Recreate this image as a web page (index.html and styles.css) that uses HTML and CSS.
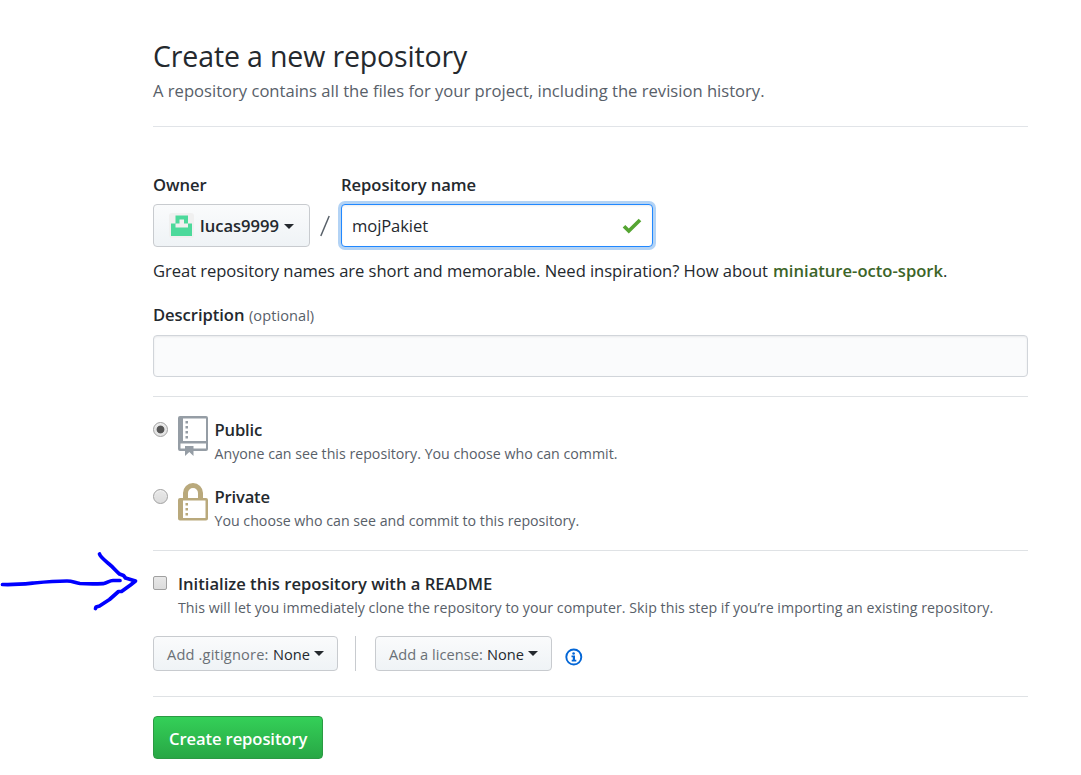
FILE: index.html
```html
<!DOCTYPE html>
<html lang="en">
<head>
<meta charset="utf-8">
<title>Create a new repository</title>
<link rel="stylesheet" href="styles.css">
</head>
<body>
<main class="page">
  <header class="head">
    <h1 class="title">Create a new repository</h1>
    <p class="lead">A repository contains all the files for your project, including the revision history.</p>
  </header>

  <div class="names">
    <div class="field">
      <span class="label owner-label">Owner</span>
      <div class="btn owner">
        <svg class="avatar" width="25" height="25" viewBox="0 0 25 25"><rect width="25" height="25" rx="3" fill="#f0f0f0"/><path fill="#4cd99b" d="M6.500 2.500h12.500v8H23v12.500H2V10.500h4.500z"/><path fill="#f0f0f0" d="M10.500 6.500h4.500v4h4v4H6.500v-4h4z"/></svg>
        <span class="owner-name">lucas9999</span><i class="caret"></i>
      </div>
    </div>
    <span class="slash"><svg width="10" height="22" viewBox="0 0 10 22"><path d="M9.200 1L.8 21" stroke="#586069" stroke-width="1.500"/></svg></span>
    <div class="field">
      <span class="label repo-label">Repository name</span>
      <div class="input focused">
        <span class="value">mojPakiet</span>
        <svg class="check" width="20" height="16" viewBox="0 0 20 16"><path d="M2 8.300l4.800 4.700L18 2" fill="none" stroke="#55a532" stroke-width="3.700"/></svg>
      </div>
    </div>
  </div>
  <p class="hint"><span class="hint-text">Great repository names are short and memorable. Need inspiration? How about </span><strong class="suggestion">miniature-octo-spork</strong>.</p>

  <div class="desc-label"><span class="label desc-word">Description</span><span class="optional">(optional)</span></div>
  <div class="input description"></div>

  <section class="visibility">
    <div class="choice">
      <span class="radio checked"></span>
      <svg class="kind" width="30" height="40" viewBox="0 0 30 40"><path fill="#959da5" fill-rule="evenodd" d="M2 0h26q2 0 2 2v31q0 2-2 2H15.500v5l-4.200-4-4.300 4v-5H2q-2 0-2-2V2q0-2 2-2zM5 2.500v22.500h23V2.500zM2.500 27.500V32.500H7V30h8.500v2.500H28v-5z"/><path fill="#959da5" d="M7.500 5h2.500v2.500H7.500zM7.500 10h2.500v2.500H7.500zM7.500 15h2.500v2.500H7.500zM7.500 20h2.500v2.500H7.500z"/></svg>
      <div class="choice-text"><span class="label public">Public</span><span class="note note-public">Anyone can see this repository. You choose who can commit.</span></div>
    </div>
    <div class="choice">
      <span class="radio"></span>
      <svg class="kind" width="30" height="40" viewBox="0 0 30 40"><path fill="#b9a97c" fill-rule="evenodd" d="M2 15h3v-5a10 10 0 0 1 20 0v5h3q2 0 2 2v18.500q0 2-2 2H2q-2 0-2-2V17q0-2 2-2zM10 15h10v-5a5 5 0 0 0-10 0zM5 17.500V35h22.500V17.500z"/><path fill="#b9a97c" d="M7.500 20h2.500v2.500H7.500zM7.500 25h2.500v2.500H7.500zM7.500 30h2.500v2.500H7.500z"/></svg>
      <div class="choice-text"><span class="label private">Private</span><span class="note note-private">You choose who can see and commit to this repository.</span></div>
    </div>
  </section>

  <section class="init">
    <div class="init-row">
      <span class="checkbox"></span>
      <div class="choice-text"><span class="label readme">Initialize this repository with a README</span><span class="note note-readme">This will let you immediately clone the repository to your computer. Skip this step if you’re importing an existing repository.</span></div>
      <svg class="arrow" width="140" height="62" viewBox="0 0 140 62"><g fill="none" stroke="#00f" stroke-width="3.700" stroke-linecap="round" stroke-linejoin="round"><path d="M2.500 34.500C15 35 24 34 34 33S57 31 67 31c6 0 8 2 13 2.500 7 .5 16 .5 23 .2 5-1 6-3 10-3.200h7"/><path d="M99.500 4c1 3 5 6 9 9.500 5 4 8 8 11 10.500l4 1.500 2 2.500 10 3-5 4-9 6.500h-3l-9 8-10 6.500-3.500 1-.5 1.500"/></g></svg>
    </div>
    <div class="menus">
      <div class="btn small"><span class="key ignore">Add .gitignore:</span><span class="none">None</span><i class="caret"></i></div>
      <span class="divider"></span>
      <div class="btn small"><span class="key license">Add a license:</span><span class="none">None</span><i class="caret"></i></div>
      <svg class="info" width="18" height="18" viewBox="0 0 18 18"><circle cx="8.800" cy="9" r="7.500" fill="none" stroke="#0366d6" stroke-width="1.900"/><circle cx="8.600" cy="5.500" r="1.300" fill="#0366d6"/><path fill="#0366d6" d="M6.500 7.600h3.500v4.200h1.300v1.600H6.700v-1.600H7.800V9.200H6.500z"/></svg>
    </div>
  </section>

  <footer class="actions">
    <div class="submit"><span class="submit-text">Create repository</span></div>
  </footer>
</main>
</body>
</html>
```
FILE: styles.css
```css
* { box-sizing: border-box; }
body {
  margin: 0;
  background: #fff;
  color: #24292e;
  font-family: "Open Sans", "Noto Sans", sans-serif;
  font-size: 16.6px;
  line-height: 26px;
}
.page { width: 1028px; padding: 40px 0 0 153px; }
.page span, .page strong { white-space: nowrap; }
.head { height: 87px; border-bottom: 1px solid #e1e4e8; }
.title { margin: 0; height: 38px; font-size: 28.5px; font-weight: 400; line-height: 32px; letter-spacing: -.14px; }
.lead { margin: 0; color: #586069; }
.names { display: flex; padding-top: 45px; }
.field { display: flex; flex-direction: column; }
.label { font-weight: 600; letter-spacing: -.06px; }
.field .label { height: 32px; }
.btn {
  display: flex;
  align-items: center;
  border: 1px solid #c8cbcf;
  border-radius: 4px;
  background: linear-gradient(#fafbfc, #eff3f6);
}
.owner { width: 157px; height: 43px; padding-left: 15px; font-weight: 600; }
.avatar { margin-right: 6px; }
.owner-name { width: 84px; padding-top: 1px; }
.caret { border: 5px solid transparent; border-top-color: #24292e; border-bottom: 0; }
.owner .caret { margin-top: 2px; }
.slash { width: 31px; padding: 43px 0 0 10px; }
.slash svg { display: block; }
.input { border: 1px solid #d1d5da; border-radius: 4px; background: #fafbfc; box-shadow: inset 0 1px 2px rgba(27,31,35,.08); }
.focused {
  display: flex;
  align-items: center;
  justify-content: space-between;
  width: 312px;
  height: 43px;
  padding: 0 10px;
  border-color: #2188ff;
  background: #fff;
  box-shadow: inset 0 1px 2px rgba(27,31,35,.075), 0 0 0 3px #b3d3f5;
}
.value { padding-top: 1px; letter-spacing: -.1px; }
.check { display: block; }
.hint { margin: 11px 0 0; white-space: nowrap; }
.page .hint-text { display: inline-block; width: 620px; white-space: pre; letter-spacing: -.058px; }
.suggestion { display: inline-block; width: 170px; color: #3c6428; font-weight: 600; }
.desc-label { display: flex; gap: 5px; height: 33px; margin-top: 18px; }
.desc-word { width: 91px; }
.optional { padding-top: 1px; color: #586069; font-size: 14.6px; line-height: 25px; letter-spacing: .05px; }
.description { height: 42px; }
.visibility { margin-top: 19px; height: 154px; padding-top: 20px; border-top: 1px solid #dfe2e5; }
.choice { display: flex; height: 67px; }
.radio {
  width: 15px;
  height: 15px;
  margin-top: 5px;
  border: 1px solid #a0a0a0;
  border-radius: 50%;
  background: linear-gradient(#e8e8e8, #dcdcdc);
  box-shadow: inset 0 1px 1px #f4f4f4;
}
.checked { background: radial-gradient(circle, #555 0 3.500px, #e4e4e4 4.300px); }
.kind { display: block; margin: -1px 6.500px 0 10px; }
.choice-text { display: flex; flex-direction: column; }
.choice-text .label { line-height: 26px; }
.public, .private { letter-spacing: -.18px; }
.readme { letter-spacing: 0; }
.note { color: #586069; font-size: 14.2px; line-height: 22px; }
.note-readme { letter-spacing: .032px; }
.init { height: 146px; padding-top: 20px; border-top: 1px solid #dfe2e5; }
.init-row { position: relative; display: flex; height: 65px; }
.checkbox {
  width: 14px;
  height: 14px;
  margin: 5px 11px 0 0;
  border: 1px solid #a0a0a0;
  border-radius: 2px;
  background: linear-gradient(#e8e8e8, #dcdcdc);
}
.arrow { position: absolute; left: -153px; top: -21px; }
.menus { display: flex; }
.small { height: 35px; padding: 0 13px; font-size: 14.6px; }
.key { color: #6a7076; }
.ignore { width: 106px; letter-spacing: .18px; }
.license { width: 98px; letter-spacing: .04px; }
.none { width: 41px; }
.divider { width: 1px; height: 35px; margin: 0 19px 0 17px; background: #c8cbcf; }
.info { margin: 12px 0 0 13px; }
.actions { padding-top: 19px; border-top: 1px solid #dfe2e5; }
.submit {
  display: flex;
  align-items: center;
  width: 170px;
  height: 43px;
  padding: 2px 0 0 15px;
  border: 1px solid #2b9a43;
  border-radius: 4px;
  background: linear-gradient(#34d058, #28a745);
  color: #fff;
  font-weight: 600;
  letter-spacing: -.1px;
}
```
